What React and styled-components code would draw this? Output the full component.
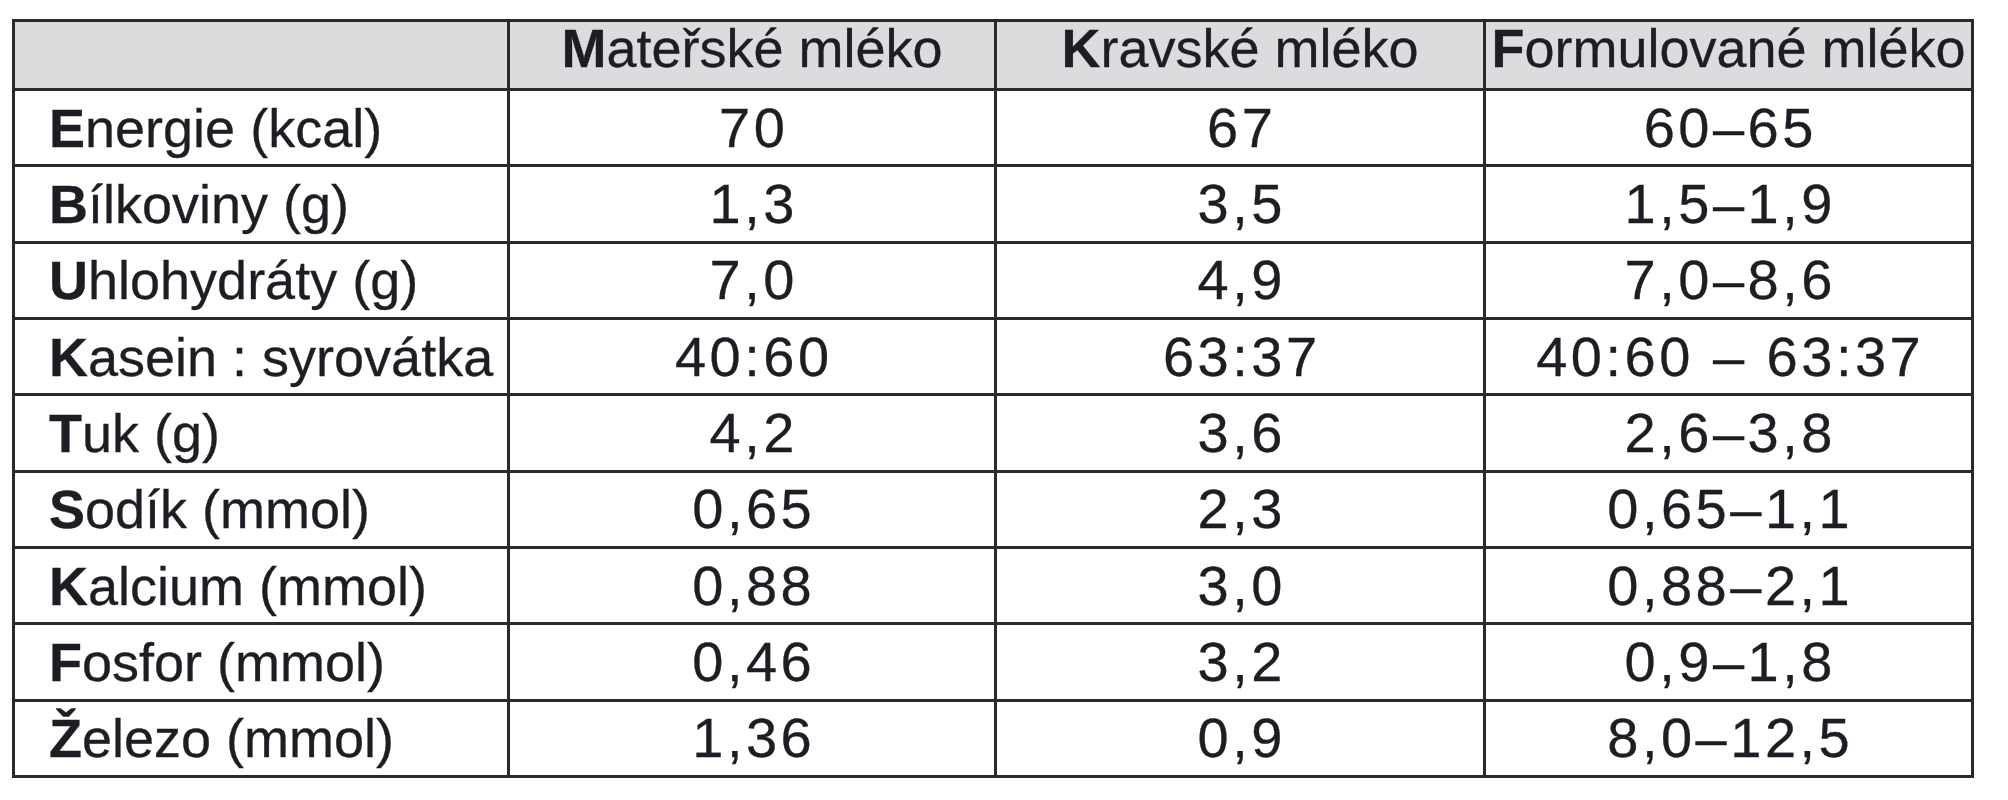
import React from "react";
import styled, { createGlobalStyle } from "styled-components";

const Global = createGlobalStyle`
  html, body { margin: 0; padding: 0; background: #ffffff; }
  body { font-family: "Liberation Sans", Arial, sans-serif; }
`;

const Page = styled.div`
  padding: 19px 0 0 12px;
  width: 2008px;
  height: 800px;
  box-sizing: border-box;
`;

const Table = styled.div`
  display: grid;
  grid-template-columns: 492px 484px 486px 485px;
  grid-template-rows: 66px repeat(9, 73.33px);
  gap: 3px;
  padding: 3px;
  width: max-content;
  background: #2a2a2a;
`;

const Cell = styled.div`
  display: flex;
  align-items: center;
  justify-content: ${(p) => (p.$label ? "flex-start" : "center")};
  padding-left: ${(p) => (p.$label ? "34px" : "0")};
  padding-bottom: ${(p) => (p.$head ? "14px" : "0")};
  box-sizing: border-box;
  background: ${(p) => (p.$head ? "#dcdcde" : "#ffffff")};
  color: #1d1d24;
  font-size: 54px;
  line-height: 1;
  white-space: nowrap;
  -webkit-text-stroke: 0.3px #1d1d24;
`;

const Lead = styled.span`
  font-weight: 700;
`;

const Value = styled.span`
  font-size: 56px;
  letter-spacing: 3.5px;
  margin-right: -3.5px;
`;

const header = ["", "Mateřské mléko", "Kravské mléko", "Formulované mléko"];

const rows = [
  ["Energie (kcal)", "70", "67", "60–65"],
  ["Bílkoviny (g)", "1,3", "3,5", "1,5–1,9"],
  ["Uhlohydráty (g)", "7,0", "4,9", "7,0–8,6"],
  ["Kasein : syrovátka", "40:60", "63:37", "40:60 – 63:37"],
  ["Tuk (g)", "4,2", "3,6", "2,6–3,8"],
  ["Sodík (mmol)", "0,65", "2,3", "0,65–1,1"],
  ["Kalcium (mmol)", "0,88", "3,0", "0,88–2,1"],
  ["Fosfor (mmol)", "0,46", "3,2", "0,9–1,8"],
  ["Železo (mmol)", "1,36", "0,9", "8,0–12,5"],
];

const Word = ({ text }) =>
  text ? (
    <span>
      <Lead>{text[0]}</Lead>
      {text.slice(1)}
    </span>
  ) : null;

export default function App() {
  return (
    <>
      <Global />
      <Page>
        <Table>
          {header.map((h, i) => (
            <Cell key={"h" + i} $head>
              <Word text={h} />
            </Cell>
          ))}
          {rows.map((r, ri) =>
            r.map((c, ci) => (
              <Cell key={ri + "-" + ci} $label={ci === 0}>
                {ci === 0 ? <Word text={c} /> : <Value>{c}</Value>}
              </Cell>
            ))
          )}
        </Table>
      </Page>
    </>
  );
}
